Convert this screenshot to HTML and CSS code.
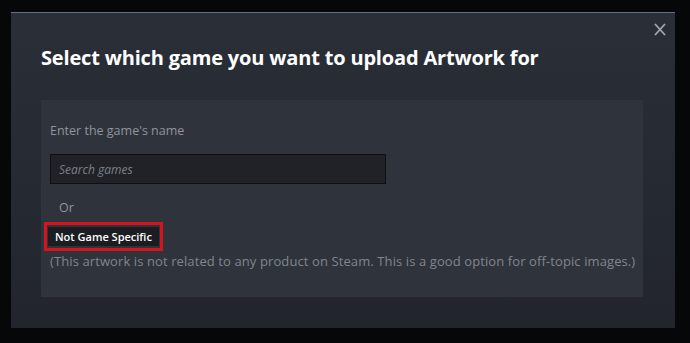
FILE: index.html
```html
<!DOCTYPE html>
<html lang="en">
<head>
  <meta charset="UTF-8" />
  <title>Upload Artwork</title>
  <link rel="stylesheet" href="styles.css">
</head>
<body>
  <div class="dialog">
    <button class="close-btn" aria-label="Close">
      <svg width="12" height="13" viewBox="0 0 12 13"><path d="M1 1 L11 12 M11 1 L1 12" stroke="#a3a7ad" stroke-width="1.8" fill="none"/></svg>
    </button>
    <h1 class="title">Select which game you want to upload Artwork for</h1>

    <div class="panel">
      <div class="label">Enter the game's name</div>
      <input class="search" type="text" placeholder="Search games">
      <div class="or">Or</div>
      <div class="highlight">
        <button class="not-specific">Not Game Specific</button>
      </div>
      <div class="note">(This artwork is not related to any product on Steam. This is a good option for off-topic images.)</div>
    </div>
  </div>
</body>
</html>
```

FILE: styles.css
```css
html, body { margin: 0; background: #060709; height: 100%; }
body { padding: 12px 15px 0 11px; font-family: "Open Sans", "Liberation Sans", sans-serif; }

.dialog {
  position: relative;
  height: 316px;
  background: linear-gradient(180deg, #2a2e37 0%, #252931 60%, #22252d 100%);
  border-top: 1px solid #5d6f94;
  padding: 30px 32px 0 30px;
  box-sizing: border-box;
}
.close-btn {
  position: absolute;
  top: 10px; right: 9px;
  background: none; border: 0; padding: 0; cursor: pointer;
}
.title {
  margin: 0 0 27px 0;
  color: #ffffff;
  font-size: 20px;
  font-weight: 700;
  letter-spacing: -0.17px;
  line-height: 30px;
}
.panel {
  background: #2f333c;
  height: 197px;
  box-sizing: border-box;
  padding: 22px 4px 0 7px;
}
.label { color: #8f959d; font-size: 12.5px; line-height: 18px; margin: 0 0 14px 2px; }
.search {
  display: block;
  width: 336px; height: 30px;
  margin-left: 2px;
  box-sizing: border-box;
  background: #202228;
  border: 1px solid #0f1013;
  color: #ddd;
  padding: 0 8px;
  font-family: "Open Sans", "Liberation Sans", sans-serif;
  font-size: 12px;
  font-style: italic;
}
.search::placeholder { color: #7c8188; }
.or { color: #8f959d; font-size: 12.5px; margin: 16px 0 0 11px; line-height: 16px; }
.highlight {
  display: inline-block;
  margin: 6px 0 0 -4px;
  border: 3px solid #d7141c;
  padding: 2px 1px;
}
.not-specific {
  display: block;
  background: #1b1d22;
  color: #ffffff;
  border: 0;
  font-family: "Open Sans", "Liberation Sans", sans-serif;
  font-size: 11px;
  font-weight: 600;
  padding: 2px 7px;
  line-height: 15px;
}
.note { color: #80868e; font-size: 13px; line-height: 18px; margin: 1px 0 0 2px; letter-spacing: 0.1px; white-space: nowrap; }
```
